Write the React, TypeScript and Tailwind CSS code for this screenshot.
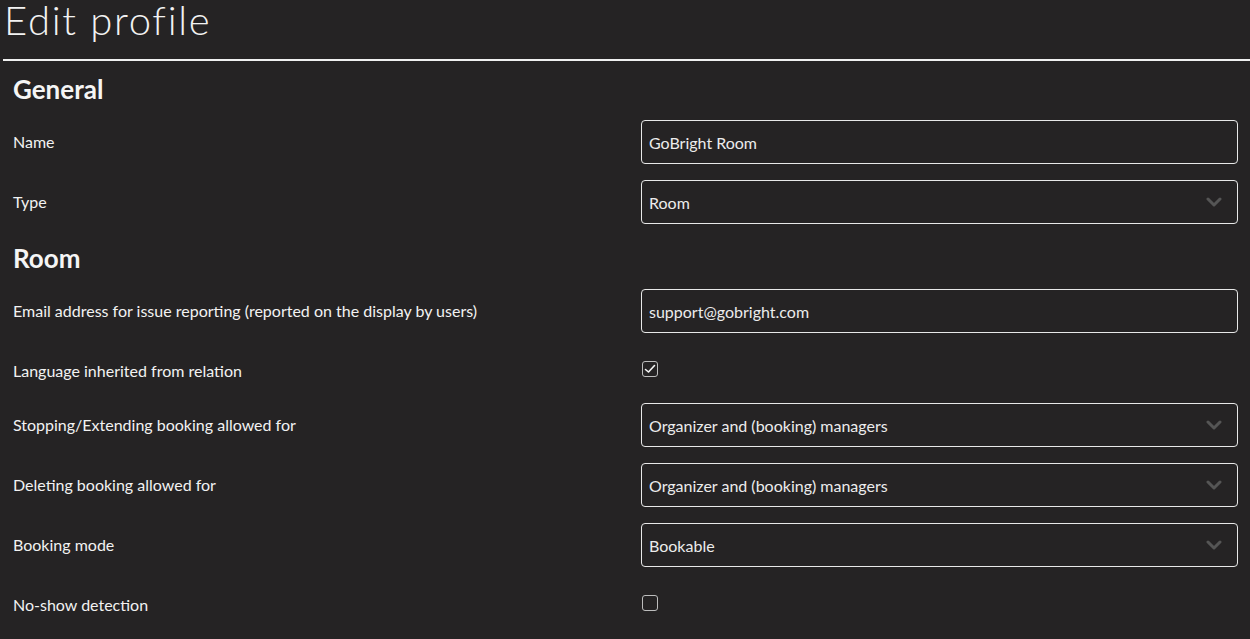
import React from "react";

const font = { fontFamily: "Lato, 'Noto Sans', sans-serif" };

function Chevron() {
  return (
    <svg width="16" height="10" viewBox="0 0 16 10" className="absolute right-[15px] top-1/2 -translate-y-1/2">
      <polyline points="2,2 8,8 14,2" fill="none" stroke="#555" strokeWidth="3" strokeLinecap="round" strokeLinejoin="round" />
    </svg>
  );
}

function Field({ value, select }: { value: string; select?: boolean }) {
  return (
    <div className="relative flex h-[44px] flex-1 items-center rounded-[4px] border border-[#e8e8e8] pl-[7px] pt-[1px] text-[16px] text-[#ececec]">
      {value}
      {select && <Chevron />}
    </div>
  );
}

function Row({ label, children }: { label: string; children: React.ReactNode }) {
  return (
    <div className="flex h-[44px] items-center">
      <div className="w-[628px] text-[16px] text-[#f2f2f2]">{label}</div>
      {children}
    </div>
  );
}

function Check({ checked }: { checked?: boolean }) {
  return (
    <div className="flex h-[16px] w-[16px] items-center justify-center rounded-[3px] border border-[#bdbdbd]">
      {checked && (
        <svg width="12" height="10" viewBox="0 0 12 10">
          <polyline points="1.5,5.5 4.5,8 10.5,1.5" fill="none" stroke="#f5f5f5" strokeWidth="1.6" strokeLinecap="round" strokeLinejoin="round" />
        </svg>
      )}
    </div>
  );
}

function CheckRow({ label, checked }: { label: string; checked?: boolean }) {
  return (
    <div className="flex h-[38px] items-center">
      <div className="w-[629px] pt-[5px] text-[16px] text-[#f2f2f2]">{label}</div>
      <div className="pt-[1px]">
        <Check checked={checked} />
      </div>
    </div>
  );
}

export default function App() {
  return (
    <div className="min-h-[639px] w-full bg-[#252324] text-white" style={font}>
      <div className="h-[59px] pl-[4px]">
        <div className="-translate-y-[4px] text-[40px] font-light leading-[48px] tracking-[1.7px] text-[#f2f2f2]">Edit profile</div>
      </div>
      <div className="ml-[3px] h-[2px] bg-[#f0f0f0]" />
      <div className="pl-[13px] pr-[12px]">
        <h2 className="mt-[12px] text-[26px] font-bold leading-[32px] text-[#f5f5f5]">General</h2>
        <div className="mt-[15px] flex flex-col gap-[16px]">
          <Row label="Name">
            <Field value="GoBright Room" />
          </Row>
          <Row label="Type">
            <Field value="Room" select />
          </Row>
        </div>
        <h2 className="mt-[18px] text-[26px] font-bold leading-[32px] text-[#f5f5f5]">Room</h2>
        <div className="mt-[15px] flex flex-col gap-[16px]">
          <Row label="Email address for issue reporting (reported on the display by users)">
            <Field value="support@gobright.com" />
          </Row>
          <CheckRow label="Language inherited from relation" checked />
          <Row label="Stopping/Extending booking allowed for">
            <Field value="Organizer and (booking) managers" select />
          </Row>
          <Row label="Deleting booking allowed for">
            <Field value="Organizer and (booking) managers" select />
          </Row>
          <Row label="Booking mode">
            <Field value="Bookable" select />
          </Row>
          <CheckRow label="No-show detection" />
        </div>
      </div>
    </div>
  );
}
